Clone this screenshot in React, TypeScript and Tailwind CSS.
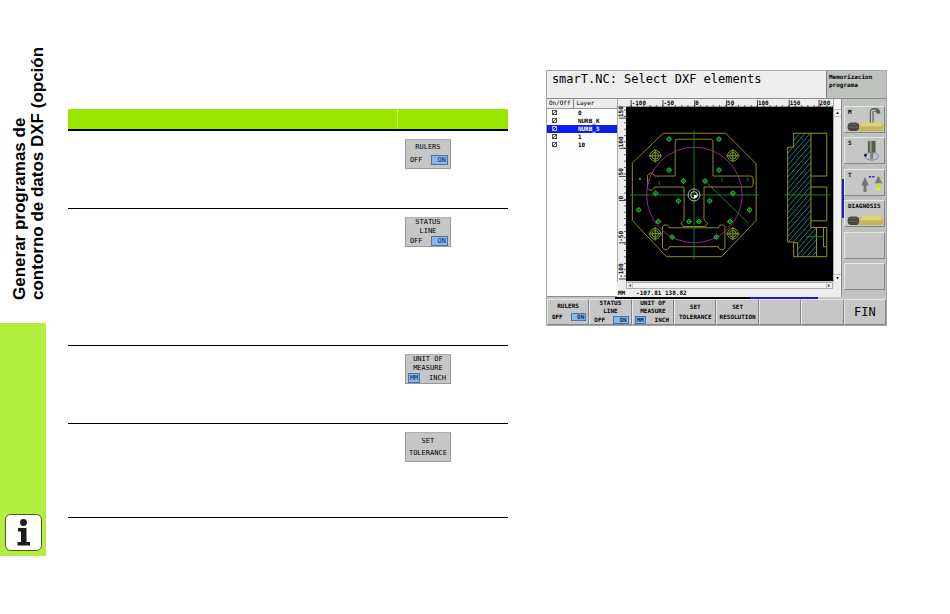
import { clsx } from "clsx";

interface SoftkeyDef {
  lines: string[];
  options?: [string, string];
  active?: 0 | 1;
}

const RULERS: SoftkeyDef = { lines: ["RULERS"], options: ["OFF", "ON"], active: 1 };
const STATUS: SoftkeyDef = { lines: ["STATUS", "LINE"], options: ["OFF", "ON"], active: 1 };
const UNIT: SoftkeyDef = { lines: ["UNIT OF", "MEASURE"], options: ["MM", "INCH"], active: 0 };
const TOLERANCE: SoftkeyDef = { lines: ["SET", "TOLERANCE"] };
const RESOLUTION: SoftkeyDef = { lines: ["SET", "RESOLUTION"] };
const EMPTY: SoftkeyDef = { lines: [] };

const ROWS = [
  { key: RULERS, height: "h-[78px]" },
  { key: STATUS, height: "h-[137px]" },
  { key: UNIT, height: "h-[78px]" },
  { key: TOLERANCE, height: "h-[94px]" },
];

const LAYERS = ["0", "NURB_K", "NURB_S", "1", "10"];

const MONO = "font-['DejaVu_Sans_Mono','Liberation_Mono',monospace]";

const BEVEL = "border border-t-[#e6e6e6] border-l-[#e6e6e6] border-r-[#858585] border-b-[#858585] bg-[#c6c6c6]";

function SoftkeyFace({ def }: { def: SoftkeyDef }) {
  return (
    <span className={clsx("flex h-full flex-col text-center", def.lines.length + (def.options ? 1 : 0) > 2 ? "justify-between" : "justify-evenly")}>
      {def.lines.map((line) => (
        <span key={line} className="block">{line}</span>
      ))}
      {def.options && (
        <span className="flex justify-between px-[2px]">
          {def.options.map((option, i) => (
            <span
              key={option}
              className={clsx(
                "border px-px",
                i === def.active ? "border-[#4773a8] bg-[#86b9f0] text-[#0c2c60]" : "border-transparent",
                i === def.active && i === 1 && "pl-[5px]",
              )}
            >
              {option}
            </span>
          ))}
        </span>
      )}
    </span>
  );
}

function Sidebar() {
  return (
    <aside className="w-[46px] shrink-0 pt-10">
      <h1 className="h-[283px] w-[46px] rotate-180 pt-[23px] pr-[11px] font-['Liberation_Sans',sans-serif] text-[17px] leading-[18px] font-bold whitespace-nowrap text-black [writing-mode:vertical-rl]">
        Generar programas de
        <br />
        contorno de datos DXF (opción
      </h1>
      <div className="flex h-[233px] items-end justify-center bg-[#b3ee3f] pb-[5px]">
        <svg viewBox="0 0 37 37" className="h-[37px] w-[37px]" aria-label="Info">
          <rect x="0.5" y="0.5" width="36" height="36" rx="5" fill="#fff" stroke="#4a5a20" />
          <circle cx="18.5" cy="8.5" r="3.4" fill="#1f1b1c" />
          <path d="M13 14h8.500v14H25v3.500H12.500V28H16V17.500h-3z" fill="#1f1b1c" />
        </svg>
      </div>
    </aside>
  );
}

function FunctionTable() {
  return (
    <table className="mt-[109px] w-full flex-[441] table-fixed border-collapse self-start">
      <thead>
        <tr className="h-[21px] border-b-2 border-black bg-[#9be600]">
          <th className="w-3/4 border-r border-[#c6f26a] p-0" aria-label="Función" />
          <th className="p-0" aria-label="Softkey" />
        </tr>
      </thead>
      <tbody>
        {ROWS.map(({ key, height }) => (
          <tr key={key.lines.join(" ")} className={clsx(height, "border-b border-black")}>
            <td className="p-0" />
            <td className="p-0 pt-[8px] pl-[7px] align-top">
              <button className={clsx(MONO, "block h-[30px] w-[46px] border border-[#999] border-t-[#b0b0b0] bg-[#c6c6c6] text-[7px] leading-[8px] text-black")}>
                <SoftkeyFace def={key} />
              </button>
            </td>
          </tr>
        ))}
      </tbody>
    </table>
  );
}

function LayerList() {
  return (
    <div className="w-[70px] shrink-0 border-b border-[#8c8c8c] bg-[#fdfdfd]">
      <table className="w-full table-fixed border-collapse text-[6px] leading-[8px]">
        <thead>
          <tr className="h-[9px] border-b border-[#999] bg-[#ececec] text-left">
            <th className="w-[27px] border-r border-[#888] p-0 pl-[2px] font-normal">On/Off</th>
            <th className="p-0 pl-[2px] font-normal">Layer</th>
          </tr>
        </thead>
        <tbody>
          {LAYERS.map((layer) => (
            <tr key={layer} className={clsx("h-[8px]", layer === "NURB_S" && "bg-[#0a1ef0] text-white")}>
              <td className="p-0 pl-[5px]">
                <input
                  id={`layer-${layer}`}
                  type="checkbox"
                  defaultChecked
                  className="block h-[5px] w-[5px] appearance-none border border-current bg-[linear-gradient(135deg,transparent_40%,currentColor_40%,currentColor_60%,transparent_60%)] opacity-70"
                />
              </td>
              <td className="p-0 pl-[4px] font-bold">
                <label htmlFor={`layer-${layer}`} className="block">{layer}</label>
              </td>
            </tr>
          ))}
        </tbody>
      </table>
    </div>
  );
}

const H_MARKS: [number, string][] = [[5, "-100"], [37, "-50"], [69, "0"], [101, "50"], [132, "100"], [164, "150"], [194, "200"]];
const V_MARKS: [number, string][] = [[12, "150"], [42, "100"], [70, "50"], [94, "0"], [136, "-50"], [172, "-100"]];

function HorizontalRuler() {
  return (
    <svg viewBox="0 0 208 8" className="block w-full bg-[#ededed]">
      {Array.from({ length: 33 }, (_, i) => (
        <path key={i} d={`M${5 + i * 6.35} 6v2`} stroke="#333" strokeWidth="0.8" />
      ))}
      <path d="M0 7.500h208" stroke="#555" strokeWidth="0.6" />
      {H_MARKS.map(([x, label]) => (
        <g key={label}>
          <path d={`M${x} 1v7`} stroke="#111" strokeWidth="0.8" />
          <text x={x + 0.5} y="6" fontSize="6" fontWeight="bold">{label}</text>
        </g>
      ))}
    </svg>
  );
}

function VerticalRuler() {
  return (
    <svg viewBox="0 0 9 182" preserveAspectRatio="none" className="block h-full w-[9px] bg-[#ededed]">
      <path d="M0 7.500h9M0.500 0v182" stroke="#999" strokeWidth="0.8" />
      {Array.from({ length: 27 }, (_, i) => (
        <path key={i} d={`M7 ${11 + i * 6.35}h2`} stroke="#333" strokeWidth="0.8" />
      ))}
      {V_MARKS.map(([y, label]) => (
        <g key={label}>
          <path d={`M2 ${y + 7}h7`} stroke="#111" strokeWidth="0.8" />
          <text transform={`translate(6 ${y + 6}) rotate(-90)`} fontSize="6" fontWeight="bold">{label}</text>
        </g>
      ))}
    </svg>
  );
}

const BIG_HOLES = [[106, 108], [340, 108], [106, 343], [340, 343]];
const HOLES = [
  [148, 58], [298, 58], [148, 151], [298, 151], [191, 184], [256, 184], [107, 221], [340, 221], [176, 244],
  [270, 244], [56, 271], [390, 271], [115, 306], [331, 306], [208, 306], [238, 306], [157, 353], [290, 353],
];
const HATCH = Array.from({ length: 26 }, (_, i) => 50 + i * 18);

function Drawing() {
  return (
    <svg viewBox="18 -39 624 525" className="block w-full bg-black" fill="none" strokeWidth="3">
      <g stroke="#8c8a20">
        <path d="M130 40H318L410 132V303L306 412H140L37 303V130Z" />
        <path d="M166 169V66q0-8 8-8H272q8 0 8 8V169H394q7 0 7 8V194q0 8-7 8H253V302L264 311L258 321H190L184 311L193 302V202H103V206q-4 6-10 6t-10-6V167q4-7 10-7t10 7V169Z" />
        <path d="M148 325H297V321q4-5 10-5t9 5V386q-3 5-9 5t-10-5V382H148V386q-4 5-10 5t-10-5V321q4-5 10-5t10 5Z" />
      </g>
      <circle cx="224" cy="226" r="144" stroke="#8c2896" />
      <g stroke="#237a28">
        <path d="M223 32V420M30 226H418M258 186L388 312M118 184v12M307 174v12M385 174v12" />
        {BIG_HOLES.map(([x, y]) => (
          <g key={`${x}-${y}`} stroke="#7fa022">
            <circle cx={x} cy={y} r="16" />
            <circle cx={x} cy={y} r="10" />
            <path d={`M${x - 20} ${y}h40M${x} ${y - 20}v40`} />
          </g>
        ))}
        {HOLES.map(([x, y]) => (
          <g key={`${x}-${y}`} stroke="#27b83b">
            <circle cx={x} cy={y} r="6" />
            <path d={`M${x - 9} ${y}h18M${x} ${y - 9}v18`} strokeWidth="2" />
          </g>
        ))}
      </g>
      <circle cx="60" cy="177" r="3" fill="#2fd64c" />
      <circle cx="223" cy="226" r="18" stroke="#a9b8a6" />
      <circle cx="223" cy="226" r="10" stroke="#d6d6d6" />
      <path d="M223 226h12l-4 8-8 3z" fill="#fff" />

      <g transform="translate(420 0)">
        <clipPath id="section">
          <path d="M103 40H155V324H172V412H115V368H85V82H103Z" />
        </clipPath>
        <g clipPath="url(#section)" stroke="#1c7c8a">
          {HATCH.map((y) => (
            <path key={y} d={`M80 ${y + 20}l100-115`} />
          ))}
        </g>
        <g stroke="#94941f">
          <path d="M103 40H203V169H155M103 40V82H85V368H103V412H203V324M155 40V324H203M155 202H203V304H155M172 324V412M115 412V370H103M193 324V382H203" />
        </g>
        <path d="M75 226H214M140 352H192" stroke="#237a28" />
      </g>
    </svg>
  );
}

function Viewport() {
  return (
    <div className="flex min-w-0 flex-1 flex-col">
      <div className="flex">
        <VerticalRuler />
        <div className="min-w-0 flex-1">
          <HorizontalRuler />
          <Drawing />
        </div>
        <svg viewBox="0 0 8 183" preserveAspectRatio="none" className="block w-[8px] shrink-0 bg-[#f2f2f2]">
          <path d="M0.500 0v183" stroke="#aaa" />
          <path d="M1 10.500h7M1 17.500h7M1 175.500h7" stroke="#999" strokeWidth="0.6" />
          <path d="M3 15l1.500-2.500L6 15zM3 178l1.500 2.500L6 178z" fill="#222" />
        </svg>
      </div>
      <div className="flex bg-[#ededed] pr-[8px] pl-[9px]">
        <div className="flex h-[7px] flex-1 items-center justify-between border border-[#aaa] bg-[#f2f2f2] px-px">
          <svg viewBox="0 0 5 5" className="h-[5px] w-[5px]"><path d="M3 1L1 2.500L3 4zM4.500 0v5" fill="#222" stroke="#999" strokeWidth="0.5" /></svg>
          <svg viewBox="0 0 5 5" className="h-[5px] w-[5px]"><path d="M2 1L4 2.500L2 4zM0.500 0v5" fill="#222" stroke="#999" strokeWidth="0.5" /></svg>
        </div>
      </div>
      <p className="flex h-[8px] gap-[11px] bg-[#ededed] pl-px text-[6px] leading-[8px] font-bold">
        <span>MM</span>
        <span>-107.81 138.82</span>
      </p>
    </div>
  );
}

function ProbeIcon() {
  return (
    <g>
      <rect x="2" y="16" width="12" height="9" rx="4" fill="#4b463b" />
      <path d="M4 18h7M3 21h10" stroke="#777062" strokeWidth="0.8" />
      <path d="M17 15h19l3 4v6H14v-5z" fill="#c4b654" />
      <path d="M17 15h19l2 5H15z" fill="#ddd27c" />
    </g>
  );
}

const ICONS = {
  M: (
    <>
      <ProbeIcon />
      <path d="M27 16V5q0-2 3-2h1q3 0 3 4" stroke="#5e6262" strokeWidth="4" fill="none" />
      <path d="M27 16V5q0-1.500 3-1.500h1" stroke="#c4caca" strokeWidth="1.500" fill="none" />
    </>
  ),
  S: (
    <>
      <ellipse cx="27" cy="19" rx="7" ry="4" stroke="#7777aa" fill="none" />
      <path d="M23 3h8v12h-8z" fill="#55604a" />
      <path d="M25 3h2v12h-2z" fill="#929d80" />
      <path d="M25.500 15h3v7h-3z" fill="#7a7d75" />
      <circle cx="20.500" cy="18" r="1.500" fill="#151557" />
    </>
  ),
  T: (
    <>
      <path d="M20 7l4 9h-2.500v7h-3v-7H16z" fill="#747774" />
      <path d="M34 6l4 8h-8z" fill="#777a70" />
      <path d="M32 14h4v8h-4z" fill="#c5df37" />
      <path d="M31 18l3 4 3-4z" fill="#dbe85a" />
      <path d="M24 7h2.500M27.500 7h2.500" stroke="#2b2bcc" strokeWidth="1.500" />
    </>
  ),
  DIAGNOSIS: <ProbeIcon />,
};

const SIDE_KEYS: (keyof typeof ICONS | null)[] = ["M", "S", "T", "DIAGNOSIS", null, null];

function SideKeys() {
  return (
    <nav className="relative flex w-[44px] shrink-0 flex-col justify-between bg-[#bdc2bd] pt-[7px] pr-px pb-[7px] pl-[2px]">
      {SIDE_KEYS.map((name, i) => (
        <button key={i} aria-label={name ?? "Softkey"} className={clsx(BEVEL, "relative h-[27px] overflow-hidden")}>
          {name && (
            <>
              <svg viewBox="0 0 39 26" className="block h-full w-full">{ICONS[name]}</svg>
              <span className="absolute top-px left-[3px] text-[6px] leading-[8px] font-bold">{name}</span>
            </>
          )}
        </button>
      ))}
      <span className="absolute top-[80px] left-0 h-[39px] w-[2px] bg-[#1c1ccc]" />
    </nav>
  );
}

const BOTTOM_KEYS = [RULERS, STATUS, UNIT, TOLERANCE, RESOLUTION, EMPTY, EMPTY];

function ControlScreen() {
  return (
    <section className={clsx(MONO, "mt-[70px] min-w-0 flex-[340] self-start border border-[#a4a8a4] bg-[#c6c6c6] text-black")}>
      <header className="flex h-[28px] border-b border-[#8c8c8c]">
        <h2 className="flex-1 bg-[#eeeeee] pt-px pl-[5px] text-[12px] leading-[14px] whitespace-nowrap">smarT.NC: Select DXF elements</h2>
        <p className="w-[60px] border-l border-[#7c7c7c] bg-[#bdc2bd] pt-[2px] pl-[2px] text-[6px] leading-[8px] font-bold">
          Memorizacion
          <br />
          programa
        </p>
      </header>
      <div className="flex">
        <div className="flex min-w-0 flex-1 border-r border-[#8c8c8c]">
          <LayerList />
          <Viewport />
        </div>
        <SideKeys />
      </div>
      <div className="flex h-[2px]">
        <span className="w-1/5" />
        <span className="w-2/5 bg-black" />
        <span className="w-1/5 bg-[#1c1ccc]" />
      </div>
      <footer className="grid grid-cols-8">
        {BOTTOM_KEYS.map((key, i) => (
          <button key={i} aria-label={key.lines.join(" ") || "Softkey"} className={clsx(BEVEL, "h-[26px] text-[6px] leading-[6px] font-bold")}>
            <SoftkeyFace def={key} />
          </button>
        ))}
        <button className={clsx(BEVEL, "h-[26px] text-[12px]")}>FIN</button>
      </footer>
    </section>
  );
}

export default function App() {
  return (
    <div className="flex min-h-screen bg-white">
      <Sidebar />
      <main className="flex min-w-0 flex-1 gap-[38px] pr-[63px] pl-[22px]">
        <FunctionTable />
        <ControlScreen />
      </main>
    </div>
  );
}
